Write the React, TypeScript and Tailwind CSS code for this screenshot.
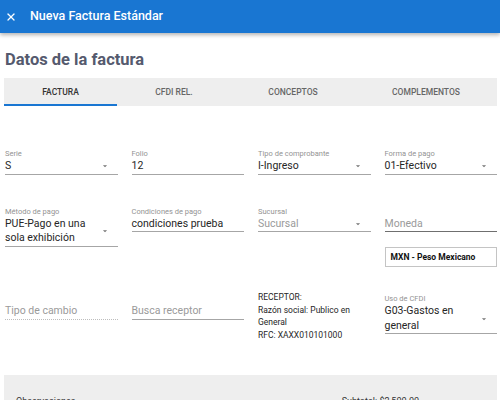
import { X } from "lucide-react";

const tabs = [
  { label: "FACTURA", w: "w-[113px]", active: true },
  { label: "CFDI REL.", w: "w-[114px]" },
  { label: "CONCEPTOS", w: "w-[124px]" },
  { label: "COMPLEMENTOS", w: "w-[142px]" },
];

function Arrow() {
  return (
    <svg width="10" height="10" viewBox="0 0 24 24" className="shrink-0 fill-[#757575]">
      <path d="M7 10l5 5 5-5z" />
    </svg>
  );
}

function Field({
  label,
  value,
  select,
  placeholder,
  dark,
  dotted,
}: {
  label?: string;
  value: React.ReactNode;
  select?: boolean;
  placeholder?: boolean;
  dark?: boolean;
  dotted?: boolean;
}) {
  return (
    <div className="flex flex-col">
      <div className="h-[10px] text-[7.5px] leading-[10px] text-[#939393]">{label}</div>
      <div
        className={`flex items-center justify-between ${
          dotted
            ? "border-b border-dotted border-[#bdbdbd]"
            : dark
              ? "border-b border-[#6f6f6f]"
              : "border-b border-[#a6a6a6]"
        }`}
      >
        <div
          className={`text-[10.5px] leading-[14.5px] ${
            placeholder ? "text-[#9a9a9a]" : "text-[#262626]"
          }`}
        >
          {value}
        </div>
        {select && (
          <div className="pr-[8px]">
            <Arrow />
          </div>
        )}
      </div>
    </div>
  );
}

export default function App() {
  return (
    <div className="h-[400px] w-[500px] overflow-hidden bg-white font-['Roboto',sans-serif]">
      {/* App bar */}
      <header className="flex h-[33px] items-center bg-[#1976d2] shadow-[0_2px_4px_rgba(0,0,0,0.3)]">
        <X className="ml-[5px] h-[12px] w-[12px] text-white" strokeWidth={2.5} />
        <span className="ml-[13px] text-[12.5px] font-medium text-white">Nueva Factura Estándar</span>
      </header>

      <h1 className="ml-[5px] mt-[16px] text-[16.5px] font-bold leading-[22px] text-[#555a6e]">
        Datos de la factura
      </h1>

      {/* Tabs */}
      <div className="ml-[4px] mt-[7px] flex h-[28px] w-[493px] bg-[#eeeeee]">
        {tabs.map((t) => (
          <div
            key={t.label}
            className={`flex ${t.w} items-center justify-center text-[8.5px] font-medium ${
              t.active ? "border-b-2 border-[#1976d2] pt-[2px] text-[#333]" : "text-[#666]"
            }`}
          >
            {t.label}
          </div>
        ))}
      </div>

      {/* Form */}
      <div className="ml-[5px] w-[492px]">
        <div className="mt-[43px] grid grid-cols-4 items-start gap-x-[14px]">
          <Field label="Serie" value="S" select />
          <Field label="Folio" value="12" />
          <Field label="Tipo de comprobante" value="I-Ingreso" select />
          <Field label="Forma de pago" value="01-Efectivo" select />
        </div>

        <div className="mt-[32px] grid grid-cols-4 items-start gap-x-[14px]">
          <Field
            label="Método de pago"
            value={
              <>
                PUE-Pago en una
                <br />
                sola exhibición
              </>
            }
            select
          />
          <Field label="Condiciones de pago" value="condiciones prueba" />
          <Field label="Sucursal" value="Sucursal" placeholder select />
          <div className="flex flex-col">
            <Field value="Moneda" placeholder dark />
            <div className="mt-[15px] border border-[#c4c4c4] px-[5px] py-[4px] text-[8.5px] font-bold leading-[10px] text-[#111]">
              MXN - Peso Mexicano
            </div>
          </div>
        </div>

        <div className="mt-[27px] grid grid-cols-4 items-start gap-x-[14px]">
          <Field value="Tipo de cambio" placeholder dotted />
          <Field value="Busca receptor" placeholder />
          <div className="-mt-[3px] text-[8.5px] leading-[12.5px] text-[#262626]">
            RECEPTOR:
            <br />
            Razón social: Publico en General
            <br />
            RFC: XAXX010101000
          </div>
          <Field
            label="Uso de CFDI"
            value={
              <>
                G03-Gastos en
                <br />
                general
              </>
            }
            select
          />
        </div>
      </div>

      {/* Totals panel */}
      <div className="ml-[4px] mt-[34px] flex h-[60px] w-[493px] bg-[#eeeeee] pl-[12px] pt-[21px] text-[9px] leading-[11px] text-[#333]">
        <span>Observaciones</span>
        <span className="ml-auto mr-[78px]">Subtotal: $2,500.00</span>
      </div>
    </div>
  );
}
